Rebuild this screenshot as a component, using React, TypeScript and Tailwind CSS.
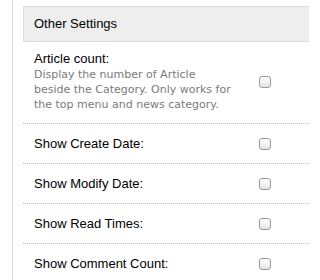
const settings = [
  "Show Create Date:",
  "Show Modify Date:",
  "Show Read Times:",
  "Show Comment Count:",
];

const Check = () => (
  <span className="block w-[12px] h-[12px] rounded-[3px] border border-[#9a9a9a] bg-gradient-to-b from-white to-[#e4e4e4] shadow-[inset_0_1px_1px_rgba(255,255,255,0.8)]" />
);

const App = () => {
  return (
    <div className="w-[309px] h-[280px] overflow-hidden bg-white font-['Liberation_Sans',Arial,sans-serif] text-[13px] text-black">
      <div className="ml-[12px] h-full w-[310px] border-l border-[#d6d6d6] pl-[10px] pt-[6px]">
        {/* Section header */}
        <div className="flex h-[36px] items-center border border-[#dcdcdc] bg-[#eeeeee] px-[10px]">
          Other Settings
        </div>

        {/* Article count */}
        <div className="flex items-center border-b border-dotted border-[#bdbdbd] pl-[11px] pt-[9px] pb-[11px]">
          <div className="w-[225px]">
            <div className="leading-[16px]">Article count:</div>
            <p className="whitespace-nowrap font-['DejaVu_Sans',Verdana,sans-serif] text-[11px] leading-[15px] text-[#7a7a7a]">
              Display the number of Article
              <br />
              beside the Category. Only works for
              <br />
              the top menu and news category.
            </p>
          </div>
          <Check />
        </div>

        {settings.map((label) => (
          <div
            key={label}
            className="flex h-[40px] items-center border-b border-dotted border-[#bdbdbd] pl-[11px]"
          >
            <div className="w-[225px]">{label}</div>
            <Check />
          </div>
        ))}
      </div>
    </div>
  );
};

export default App;
